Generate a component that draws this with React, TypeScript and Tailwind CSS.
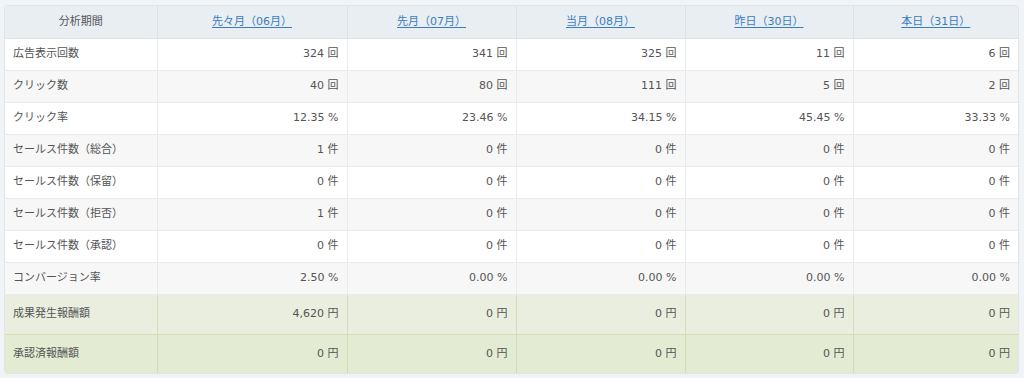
import React from "react";

const headers = ["先々月（06月）", "先月（07月）", "当月（08月）", "昨日（30日）", "本日（31日）"];

type Row = { label: string; values: string[]; green?: boolean };

const rows: Row[] = [
  { label: "広告表示回数", values: ["324 回", "341 回", "325 回", "11 回", "6 回"] },
  { label: "クリック数", values: ["40 回", "80 回", "111 回", "5 回", "2 回"] },
  { label: "クリック率", values: ["12.35 %", "23.46 %", "34.15 %", "45.45 %", "33.33 %"] },
  { label: "セールス件数（総合）", values: ["1 件", "0 件", "0 件", "0 件", "0 件"] },
  { label: "セールス件数（保留）", values: ["0 件", "0 件", "0 件", "0 件", "0 件"] },
  { label: "セールス件数（拒否）", values: ["1 件", "0 件", "0 件", "0 件", "0 件"] },
  { label: "セールス件数（承認）", values: ["0 件", "0 件", "0 件", "0 件", "0 件"] },
  { label: "コンバージョン率", values: ["2.50 %", "0.00 %", "0.00 %", "0.00 %", "0.00 %"] },
  { label: "成果発生報酬額", values: ["4,620 円", "0 円", "0 円", "0 円", "0 円"], green: true },
  { label: "承認済報酬額", values: ["0 円", "0 円", "0 円", "0 円", "0 円"], green: true },
];

export default function App() {
  return (
    <div
      className="w-[1024px] h-[378px] bg-[#f1f4f7] pt-[5px] pl-[4px] text-[11px] text-[#555]"
      style={{ fontFamily: '"DejaVu Sans", "Noto Sans CJK JP", sans-serif' }}
    >
      <div className="w-[1015px] rounded-[3px] overflow-hidden border border-[#dfe5eb] bg-white">
        <table className="w-full table-fixed border-collapse">
          <colgroup>
            <col className="w-[152px]" />
            <col className="w-[190px]" />
            <col className="w-[169px]" />
            <col className="w-[169px]" />
            <col className="w-[168px]" />
            <col />
          </colgroup>
          <thead>
            <tr className="h-[32px] bg-[#e9eef3]">
              <th className="font-normal text-center border-r border-b border-[#dbe2e9]">分析期間</th>
              {headers.map((h, i) => (
                <th
                  key={h}
                  className={`font-normal text-center border-b border-[#dbe2e9] ${i < 4 ? "border-r" : ""}`}
                >
                  <a className="text-[#3a7cc2] underline underline-offset-2 cursor-pointer">{h}</a>
                </th>
              ))}
            </tr>
          </thead>
          <tbody>
            {rows.map((r, ri) => {
              const bg = r.green
                ? ri === 8
                  ? "bg-[#e9eede]"
                  : "bg-[#e3ebd2]"
                : ri % 2 === 1
                ? "bg-[#f7f7f7]"
                : "bg-white";
              const bc = r.green ? "border-[#d2ddb7]" : "border-[#e8ebee]";
              const last = ri === rows.length - 1;
              const h = r.green ? (last ? "h-[39px]" : "h-[40px]") : "h-[32px]";
              return (
                <tr key={r.label} className={`${h} ${bg}`}>
                  <td className={`pl-[8px] text-left border-r ${last ? "" : "border-b"} ${bc}`}>{r.label}</td>
                  {r.values.map((v, vi) => (
                    <td
                      key={vi}
                      className={`pr-[8px] text-right ${vi < 4 ? "border-r" : ""} ${last ? "" : "border-b"} ${bc}`}
                    >
                      {v}
                    </td>
                  ))}
                </tr>
              );
            })}
          </tbody>
        </table>
      </div>
    </div>
  );
}
